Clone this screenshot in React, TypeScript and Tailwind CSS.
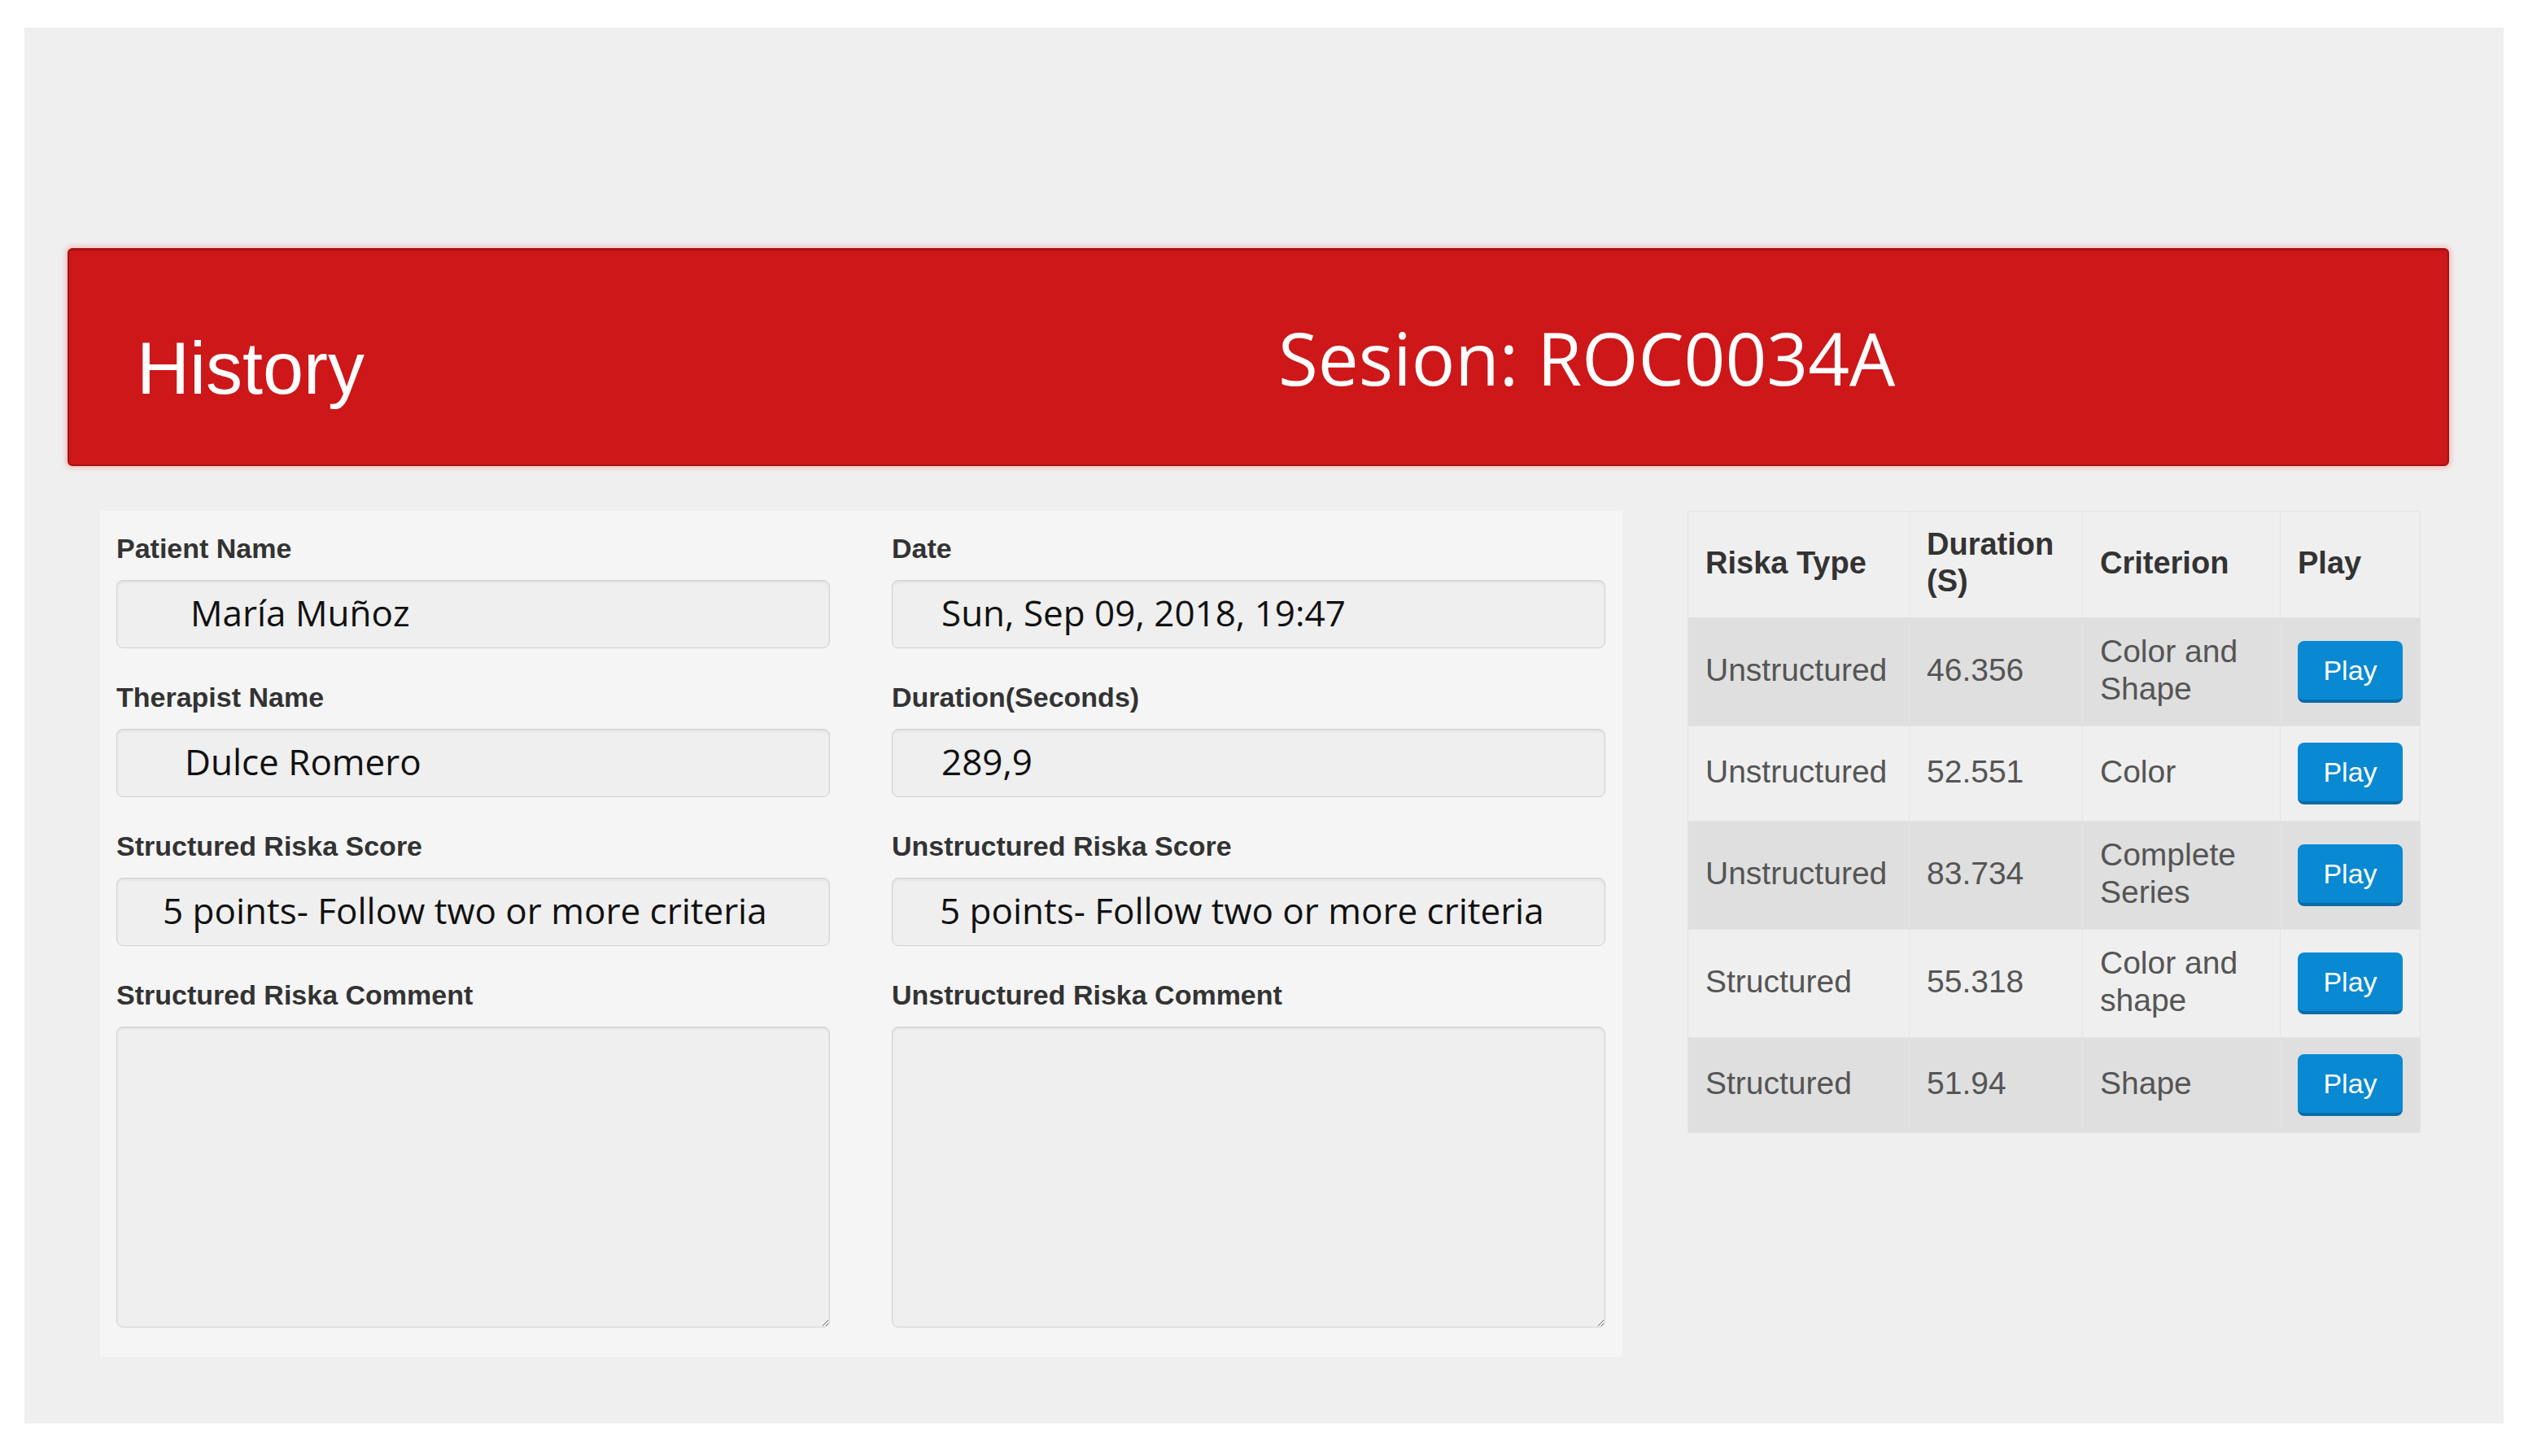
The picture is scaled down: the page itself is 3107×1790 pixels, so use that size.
import React from 'react'

const sans = "font-['Liberation_Sans',Arial,sans-serif]"
const open = "font-['Open_Sans',sans-serif]"

const rows = [
    { type: 'Unstructured', duration: '46.356', criterion: 'Color and Shape' },
    { type: 'Unstructured', duration: '52.551', criterion: 'Color' },
    { type: 'Unstructured', duration: '83.734', criterion: 'Complete Series' },
    { type: 'Structured', duration: '55.318', criterion: 'Color and shape' },
    { type: 'Structured', duration: '51.94', criterion: 'Shape' },
]

function Label({ children }: { children: React.ReactNode }) {
    return (
        <label className={`block ${sans} font-bold text-[34px] leading-[41px] text-[#333] mb-[18px]`}>
            {children}
        </label>
    )
}

function Field({ label, value, pad }: { label: string; value: string; pad: string }) {
    return (
        <div>
            <Label>{label}</Label>
            <input
                readOnly
                value={value}
                className={`w-full h-[84px] ${pad} pb-[4px] ${open} text-[44px] text-[#111] bg-[#efefef] border border-[#d2d2d2] rounded-[8px] shadow-[inset_0_2px_3px_rgba(0,0,0,0.07)] outline-none`}
            />
        </div>
    )
}

function Comment({ label }: { label: string }) {
    return (
        <div>
            <Label>{label}</Label>
            <textarea
                readOnly
                className="block w-full h-[370px] bg-[#efefef] border border-[#d2d2d2] rounded-[8px] shadow-[inset_0_2px_3px_rgba(0,0,0,0.07)] outline-none"
            />
        </div>
    )
}

export default function App() {
    return (
        <div className="w-[3107px] h-[1790px] bg-white pt-[34px] px-[30px] overflow-hidden">
            <div className="h-[1716px] bg-[#efefef] pt-[271px] pl-[53px] pr-[67px]">
                {/* Header banner */}
                <div className="h-[268px] bg-[#cd1719] border-2 border-t-[3px] border-[#a81212] rounded-[6px] shadow-[0_0_6px_2px_rgba(255,120,120,0.45)] flex items-center pl-[83px]">
                    <div className={`w-[1403px] mt-[26px] ${sans} text-[90px] leading-[90px] text-white`}>
                        History
                    </div>
                    <div className={`${open} text-[89px] leading-[90px] text-white`}>
                        Sesion: ROC0034A
                    </div>
                </div>

                <div className="flex items-start gap-[80px] mt-[55px] ml-[40px] mr-[35px]">
                    {/* Session form */}
                    <div className="w-[1872px] bg-[#f5f5f5] pt-[26px] pl-[20px] pr-[21px] pb-[36px]">
                        <div className="grid grid-cols-2 gap-x-[76px] gap-y-[40px]">
                            <Field label="Patient Name" value="María Muñoz" pad="pl-[90px]" />
                            <Field label="Date" value="Sun, Sep 09, 2018, 19:47" pad="pl-[60px]" />
                            <Field label="Therapist Name" value="Dulce Romero" pad="pl-[83px]" />
                            <Field label="Duration(Seconds)" value="289,9" pad="pl-[60px]" />
                            <Field
                                label="Structured Riska Score"
                                value="5 points- Follow two or more criteria"
                                pad="pl-[56px]"
                            />
                            <Field
                                label="Unstructured Riska Score"
                                value="5 points- Follow two or more criteria"
                                pad="pl-[58px]"
                            />
                            <Comment label="Structured Riska Comment" />
                            <Comment label="Unstructured Riska Comment" />
                        </div>
                    </div>

                    {/* Riska table */}
                    <table className={`w-[900px] table-fixed border-collapse ${sans}`}>
                        <colgroup>
                            <col className="w-[272px]" />
                            <col className="w-[213px]" />
                            <col className="w-[243px]" />
                            <col className="w-[172px]" />
                        </colgroup>
                        <thead>
                            <tr className="bg-[#efefef] text-[#333] text-[38px] leading-[45px] font-bold text-left">
                                <th className="px-[21px] pt-[18px] pb-[22px] border border-[#e4e4e4] align-middle">Riska Type</th>
                                <th className="px-[21px] pt-[18px] pb-[22px] border border-[#e4e4e4] align-middle">Duration (S)</th>
                                <th className="px-[21px] pt-[18px] pb-[22px] border border-[#e4e4e4] align-middle">Criterion</th>
                                <th className="px-[21px] pt-[18px] pb-[22px] border border-[#e4e4e4] align-middle">Play</th>
                            </tr>
                        </thead>
                        <tbody>
                            {rows.map((r, i) => (
                                <tr
                                    key={i}
                                    className={`${i % 2 === 0 ? 'bg-[#dfdfdf]' : 'bg-[#efefef]'} text-[#555] text-[39px] leading-[46px]`}
                                >
                                    <td className="px-[21px] pt-[18px] pb-[22px] border border-[#e4e4e4] align-middle whitespace-nowrap">{r.type}</td>
                                    <td className="px-[21px] pt-[18px] pb-[22px] border border-[#e4e4e4] align-middle">{r.duration}</td>
                                    <td className="px-[21px] pt-[18px] pb-[22px] border border-[#e4e4e4] align-middle">{r.criterion}</td>
                                    <td className="px-[21px] py-[20px] border border-[#e4e4e4] align-middle">
                                        <button className="w-[129px] h-[76px] bg-[#0889d2] border-b-4 border-[#086ca8] rounded-[8px] text-white text-[34px] leading-[34px]">
                                            Play
                                        </button>
                                    </td>
                                </tr>
                            ))}
                        </tbody>
                    </table>
                </div>
            </div>
        </div>
    )
}
